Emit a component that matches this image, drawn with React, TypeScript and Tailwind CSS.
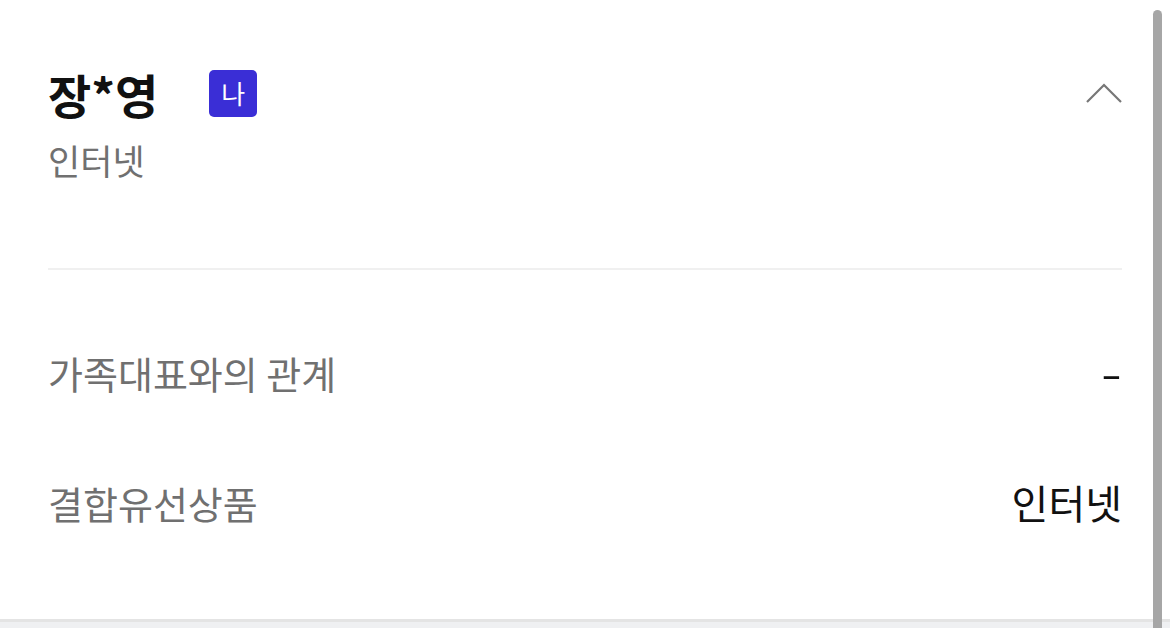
import React from "react";

const rows = [
  { label: "가족대표와의 관계", value: "-" },
  { label: "결합유선상품", value: "인터넷" },
];

const App: React.FC = () => {
  return (
    <div
      className="relative w-[1170px] h-[628px] bg-white overflow-hidden flex flex-col"
      style={{ fontFamily: '"Noto Sans CJK KR", "Noto Sans", sans-serif' }}
    >
      {/* member header */}
      <div className="px-12 pt-[66px] flex justify-between items-start h-[268px] shrink-0">
        <div className="flex flex-col">
          <div className="flex items-center">
            <span className="text-[47px] leading-[56px] font-bold text-[#111]">장*영</span>
            <span className="ml-[51px] mb-[2px] w-[48px] h-[47px] rounded-[5px] bg-[#3a2ed6] text-white text-[26px] flex items-center justify-center leading-none">
              나
            </span>
          </div>
          <span className="mt-[16px] text-[35px] leading-[44px] text-[#707070]">인터넷</span>
        </div>
        <svg className="mt-[16px]" width="36" height="22" viewBox="0 0 36 22" fill="none">
          <path d="M1 20 L18 3 L35 20" stroke="#777" strokeWidth="2.2" />
        </svg>
      </div>
      <div className="mx-12 h-[2px] bg-[#f0f0f0] shrink-0" />

      <div className="flex flex-col pt-[37px]">
        {rows.map((r) => (
          <div key={r.label} className="px-12 h-[130px] flex justify-between items-center">
            <span className="text-[38px] text-[#707070]">{r.label}</span>
            {r.value === "-" ? (
              <span className="text-[40px] text-[#111] inline-block scale-x-150 origin-right">-</span>
            ) : (
              <span className="text-[40px] text-[#111]">{r.value}</span>
            )}
          </div>
        ))}
      </div>

      <div className="mt-auto h-[9px] border-t-[3px] border-[#e4e4e4] bg-[#eff0f2] shrink-0" />

      {/* scrollbar */}
      <div className="absolute right-[8px] top-[10px] bottom-0 w-[9px] rounded-t-full bg-[#a6a6a6]" />
    </div>
  );
};

export default App;
